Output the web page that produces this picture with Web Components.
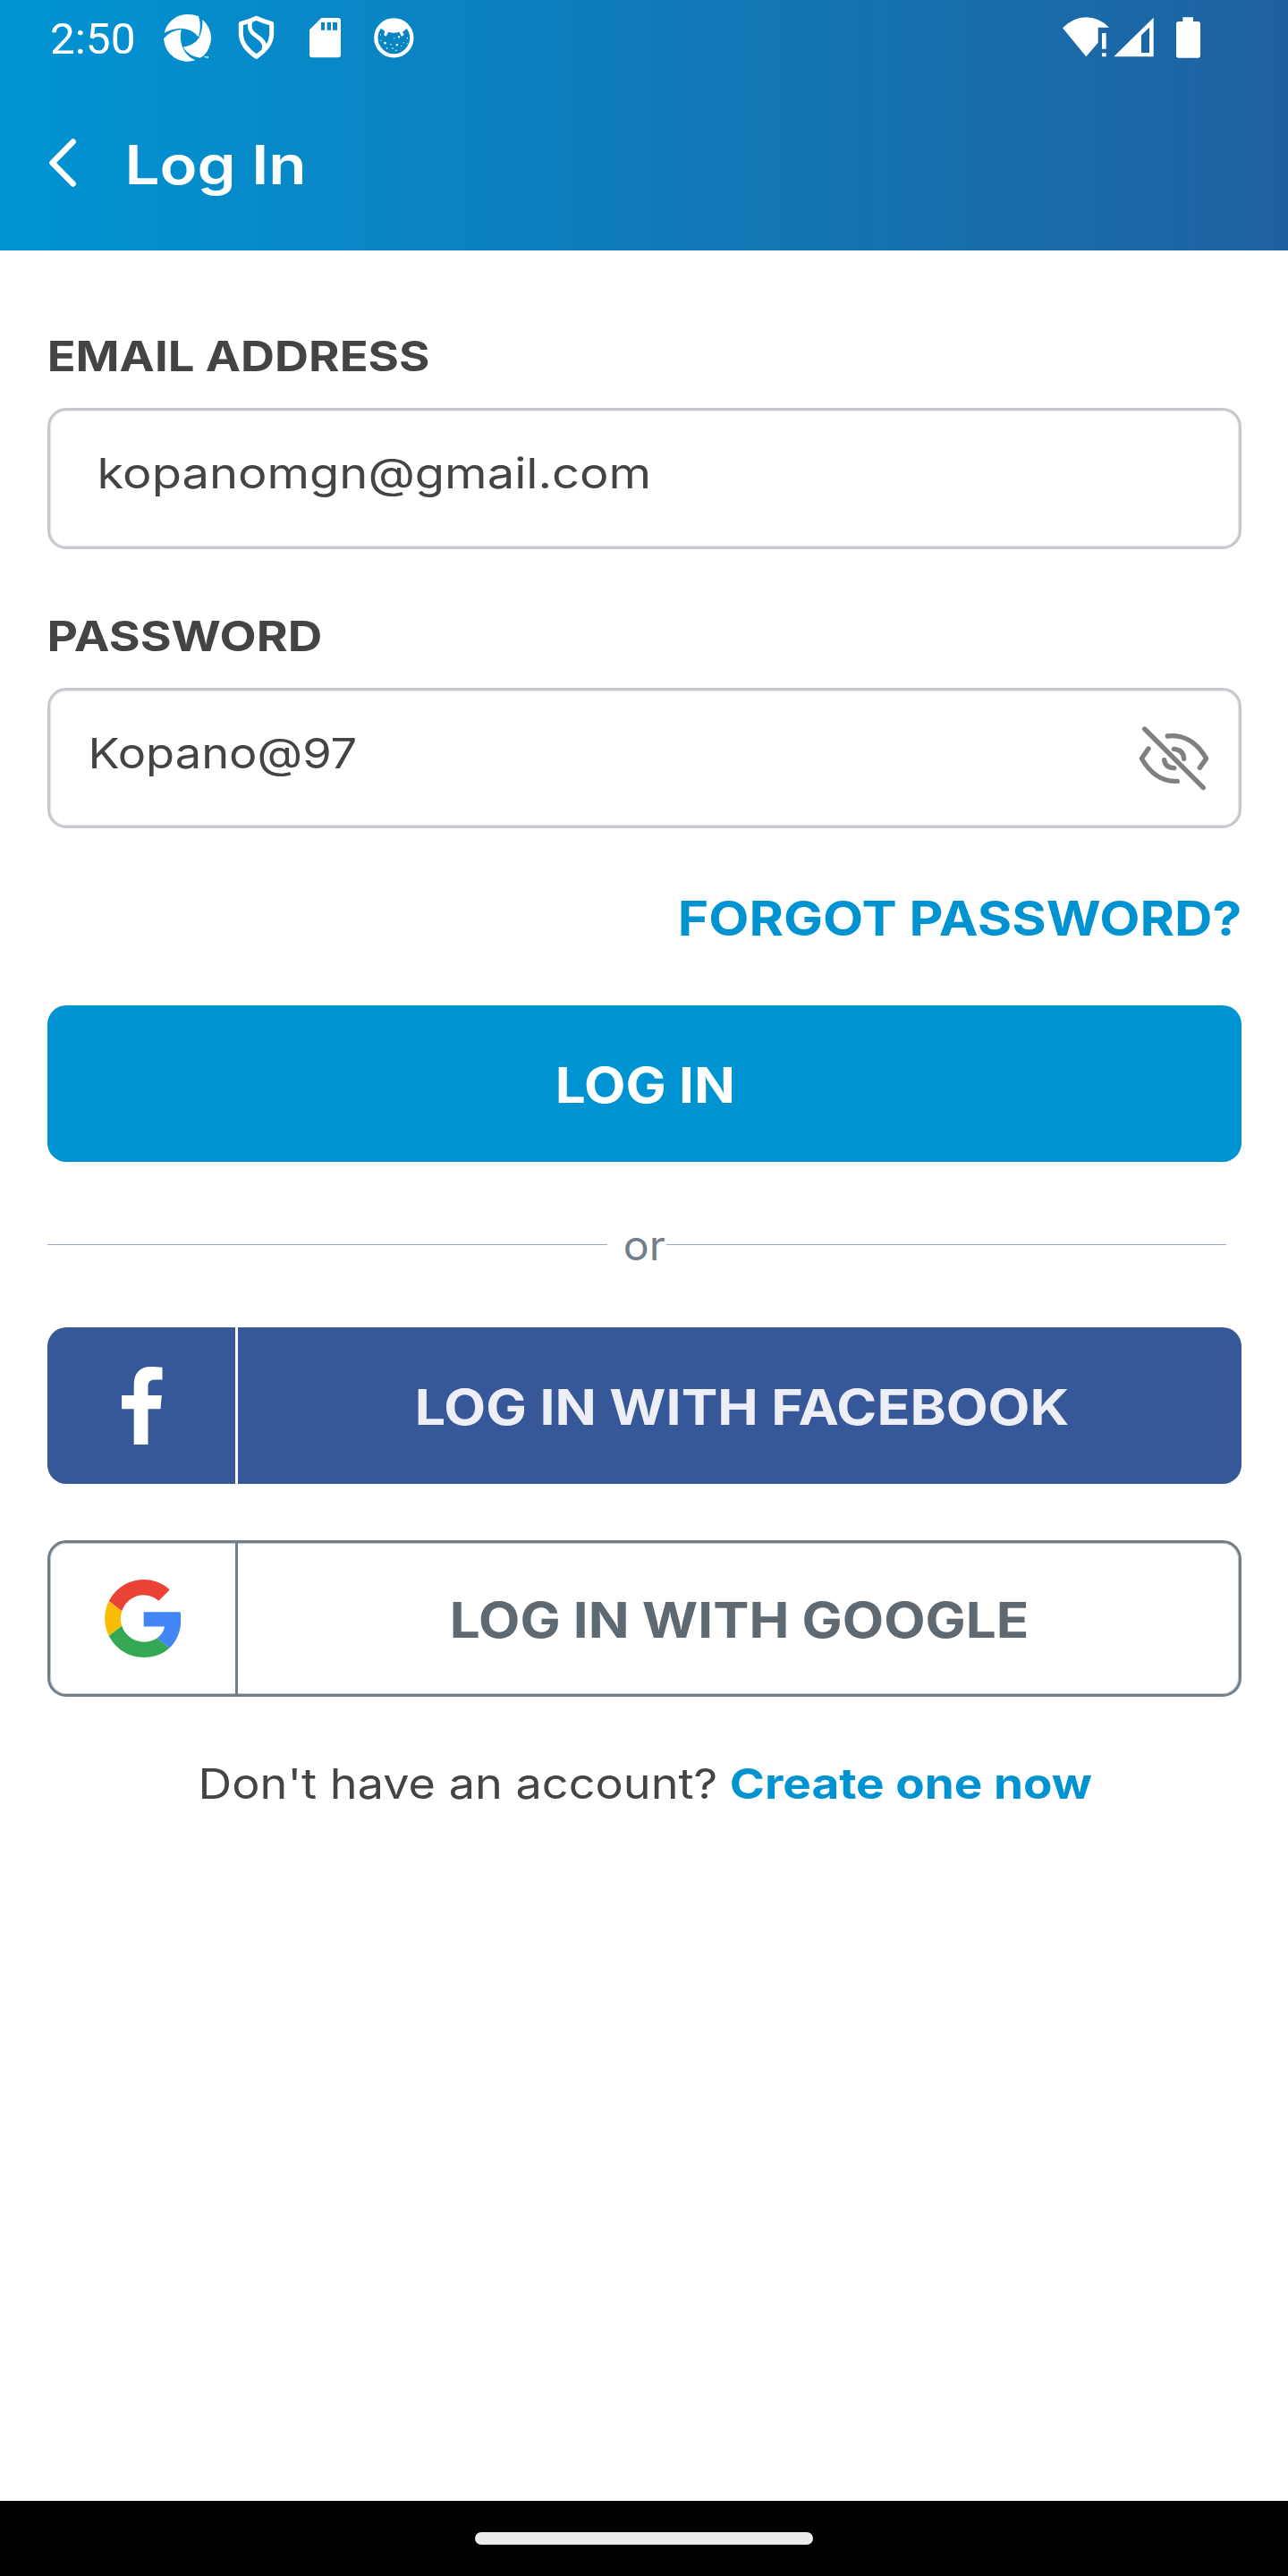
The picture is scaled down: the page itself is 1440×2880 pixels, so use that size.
<!DOCTYPE html>
<html lang="en">
<head>
<meta charset="utf-8">
<title>Log In</title>
<style>
html,body{margin:0;padding:0;background:#fff}
body{width:1440px;height:2880px;overflow:hidden;font-family:Inter,"Open Sans",sans-serif}
</style>
</head>
<body>
<login-screen></login-screen>
<script>
const define = (name, html) => customElements.define(name, class extends HTMLElement {
  connectedCallback() {
    if (this.shadowRoot) return;
    this.attachShadow({ mode: 'open' }).innerHTML = html;
  }
});

/* One line of type. "span" is the inked width in px that the line is fitted to. */
customElements.define('type-line', class extends HTMLElement {
  connectedCallback() {
    if (this.shadowRoot) return;
    const a = n => this.getAttribute(n);
    const size = a('size'), weight = a('weight') || 400, family = a('family') || 'Inter', span = +a('span');
    const ctx = document.createElement('canvas').getContext('2d');
    ctx.font = `${weight} ${size}px ${family}`;
    const m = ctx.measureText(this.textContent);
    const sx = span / (m.actualBoundingBoxLeft + m.actualBoundingBoxRight);
    this.attachShadow({ mode: 'open' }).innerHTML = `<style>
      :host{display:block;flex:none;width:${span}px;height:60px;white-space:nowrap;
        font:${weight} ${size}px/60px ${family},sans-serif}
      span{display:inline-block;transform-origin:0 50%;
        transform:scaleX(${sx}) translateX(${m.actualBoundingBoxLeft}px)}
    </style><span><slot></slot></span>`;
  }
});

define('status-bar', `<style>
  :host{display:flex;align-items:flex-start;height:88px;color:#fff;padding-left:58px;box-sizing:border-box}
  type-line{margin-top:14px}
  svg{display:block;flex:none;fill:#fff}
</style>
<type-line size="49" span="91" family="Roboto">2:50</type-line>
<svg style="margin-left:33px" width="56" height="88" viewBox="546 0 168 264">
  <path d="M551 110A80 80 0 0 1 628 48Q650 48 666 55Q677 87 666 124Q644 96 606 95Q577 97 551 110Z"/>
  <path d="M679 66Q708 91 708 128Q707 162 683 187L671 194Q633 189 614 158Q650 154 668 126Q681 98 679 66Z"/>
  <path d="M608 99Q601 129 612 158Q625 189 655 202A80 80 0 0 1 549 130Q571 102 608 99Z"/>
  <path d="M685 189h7v2h-2v3h-2v-3h-3zM693 189l2 2 2-2h2v6h-2v-3l-2 2-1-2v3h-2z"/>
</svg>
<svg style="margin-left:28px" width="41" height="88" viewBox="798 0 123 264">
  <g fill="none" stroke="#fff" stroke-width="15" stroke-linejoin="round">
  <path d="M860 61Q884 73 911 79V117Q909 157 860 190Q811 157 808 117V79Q836 73 860 61Z"/>
  <path d="M840 70Q836 84 839 96Q842 109 863 123Q895 144 884 168" stroke-width="14"/></g>
</svg>
<svg style="margin-left:39px" width="36" height="88" viewBox="1038 0 108 264">
  <path fill-rule="evenodd" d="M1078 60H1134Q1143 60 1143 69V184Q1143 193 1134 193H1047Q1038 193 1038 184V100ZM1077 75V101H1089V75ZM1097 75V101H1110V75ZM1116 75V101H1131V75Z"/>
</svg>
<svg style="margin-left:36px" width="45" height="88" viewBox="1254 0 135 264">
  <circle cx="1321" cy="127" r="60" fill="none" stroke="#fff" stroke-width="13"/>
  <path d="M1274 93Q1292 64 1321 63Q1350 64 1368 93L1350 107L1355 117L1347 122L1339 107Q1321 113 1303 107L1295 122L1287 117L1291 105Z"/>
  <path d="M1335 121h6v6h-6zM1288 141h7v7h-7zM1328 147h7v7h-7zM1276 134h3v3h-3zM1321 127h3v3h-3zM1309 147h4v4h-4zM1303 125h2v2h-2zM1296 160h4v4h-4zM1315 160h4v4h-4zM1327 167h4v4h-4zM1352 142h3v3h-3zM1364 126h4v4h-4zM1345 153h3v3h-3zM1275 115h3v3h-3zM1364 145h3v3h-3z"/>
</svg>
<svg style="margin-left:725px" width="54" height="88" viewBox="84 0 162 264">
  <path d="M84 94Q120 58 163 58Q205 58 240 92H203V143L163 190ZM216 111h14v53h-14zM216 178h14v12h-14z"/>
</svg>
<svg style="margin-left:3px" width="45" height="88" viewBox="255 0 135 264">
  <path fill-rule="evenodd" d="M256 190L389 59V190ZM348 118V177H375V92Z"/>
</svg>
<svg style="margin-left:25px" width="27" height="88" viewBox="465 0 81 264">
  <path d="M487 58H522V72H538Q546 72 546 80V186Q546 194 538 194H473Q465 194 465 186V80Q465 72 473 72H487Z"/>
</svg>`);

define('text-field', `<style>
  :host{display:block;color:#444}
  .label{margin:0 0 28px 3px}
  .box{display:flex;align-items:center;justify-content:space-between;box-sizing:border-box;height:var(--h,158px);
    border:3px solid #c8c7ce;border-radius:21px;box-shadow:inset 0 0 0 1px #e6e6ea;padding:0 33px 0 var(--inset)}
  .value{padding-bottom:12px}
</style>
<div class="label"><slot name="label"></slot></div>
<div class="box"><div class="value"><slot></slot></div><slot name="action"></slot></div>`);

define('eye-off-icon', `<style>:host{display:block}svg{display:block}</style>
<svg width="79" height="76" viewBox="219 180 237 228" fill="none" stroke="#808080" stroke-width="16" stroke-linecap="round" stroke-linejoin="round">
  <path d="M239 195L436 392M316 219C370 211 415 241 446 294L424 325M252 261L229 294C262 350 305 373 349 370M337 262Q369 264 371 295M305 299Q309 326 338 326"/>
</svg>`);

define('primary-button', `<style>
  :host{display:flex;align-items:center;justify-content:center;height:175px;box-sizing:border-box;padding-top:3px;
    border-radius:21px;background:#0093d1;color:#fff}
</style><slot></slot>`);

define('or-divider', `<style>
  :host{display:flex;align-items:center;height:59px;color:#737f88}
  i{display:block;flex:none;width:626px;height:1px;background:#9aa9b8}
  .t{margin:0 2px 0 20px;padding-top:2px}
</style><i></i><div class="t"><slot></slot></div><i></i>`);

define('social-button', `<style>
  :host{display:flex;box-sizing:border-box;height:175px;border-radius:21px;overflow:hidden}
  :host([brand=facebook]){background:#375898;color:#eeeff6;--rule:#fff;--pad:0px}
  :host([brand=google]){border:3px solid #727e87;box-shadow:inset 0 0 0 1px #c3c8cc;color:#5f6971;--rule:#727e87;--pad:3px}
  .mark{display:flex;align-items:center;justify-content:center;width:calc(210px - var(--pad));border-right:3px solid var(--rule)}
  .text{display:flex;flex:1;align-items:center;padding-top:3px}
</style>
<div class="mark"><slot name="mark"></slot></div><div class="text"><slot></slot></div>`);

define('facebook-mark', `<style>:host{display:block;padding-left:2px}svg{display:block}</style>
<svg width="46" height="87" viewBox="135.500 1528 46 87"><path fill="#fff" d="M149.200 1615V1575.300H135.600V1560H149.200V1548C149.200 1535 156 1528 168 1528C172 1528 177 1528.500 181 1528.800V1542.500H173C167 1542.500 165 1545.500 165 1550V1560H180.300L179 1575.300H165V1615Z"/></svg>`);

define('google-mark', `<style>:host{display:block}svg{display:block}</style>
<svg width="85.500" height="87" viewBox="0 0 47 48">
<path fill="#EA4335" d="M24 9.500c3.540 0 6.710 1.220 9.210 3.600l6.850-6.850C35.900 2.380 30.470 0 24 0 14.620 0 6.510 5.380 2.560 13.220l7.980 6.190C12.430 13.720 17.740 9.500 24 9.500z"/>
<path fill="#4285F4" d="M46.980 24.550c0-1.570-.15-3.090-.38-4.550H24v9.020h12.940c-.58 2.960-2.260 5.480-4.780 7.180l7.730 6c4.510-4.180 7.090-10.360 7.090-17.650z"/>
<path fill="#FBBC05" d="M10.530 28.590c-.48-1.450-.76-2.990-.76-4.590s.27-3.140.76-4.590l-7.980-6.190C.92 16.460 0 20.120 0 24c0 3.880.92 7.540 2.560 10.780l7.970-6.190z"/>
<path fill="#34A853" d="M24 48c6.480 0 11.930-2.130 15.890-5.810l-7.730-6c-2.150 1.450-4.920 2.300-8.160 2.300-6.260 0-11.570-4.220-13.470-9.910l-7.980 6.190C6.510 42.620 14.620 48 24 48z"/></svg>`);

define('home-indicator', `<style>
  :host{display:flex;justify-content:center;align-items:center;height:84px;background:#000}
  i{display:block;width:378px;height:14px;border-radius:7px;background:#ebebeb}
</style><i></i>`);

define('page-header', `<style>
  :host{display:flex;flex-direction:column;height:280px;background:linear-gradient(90deg,#0094d3,#1f61a0);color:#fff}
  nav{display:flex;align-items:center;height:192px;padding-left:53px}
  svg{display:block;margin:0 56px 4px 0}
</style>
<status-bar></status-bar>
<nav>
  <svg width="35" height="60" viewBox="53 152 35 60"><path d="M81.700 158.500L58.500 182L81.700 205.500" fill="none" stroke="#fff" stroke-width="6.500" stroke-linecap="round" stroke-linejoin="round"/></svg>
  <type-line size="60.500" weight="600" span="194">Log In</type-line>
</nav>`);

define('login-screen', `<style>
  :host{display:flex;flex-direction:column;width:1440px;height:2880px;background:#fff}
  main{display:flex;flex-direction:column;padding:88px 52px 0 53px}
  .forgot{display:flex;justify-content:flex-end;margin:71px 2px 67px 0;color:#0093d1}
  .signup{display:flex;margin:67px 0 0 173px;color:#444}
  .signup b{display:block;margin-left:17.500px;font-weight:inherit;color:#0093d1}
  home-indicator{margin-top:auto}
</style>
<page-header></page-header>
<main>
  <text-field style="--inset:56px">
    <type-line slot="label" size="47" weight="700" span="422.500">EMAIL ADDRESS</type-line>
    <type-line size="47" span="612.500">kopanomgn@gmail.com</type-line>
  </text-field>
  <text-field style="--h:157px;--inset:47px;margin-top:67px">
    <type-line slot="label" size="47" weight="700" span="302">PASSWORD</type-line>
    <type-line size="47" span="294.500">Kopano@97</type-line>
    <eye-off-icon slot="action"></eye-off-icon>
  </text-field>
  <div class="forgot"><type-line size="53" weight="700" span="625.500">FORGOT PASSWORD?</type-line></div>
  <primary-button><type-line size="54.500" weight="700" span="194">LOG IN</type-line></primary-button>
  <or-divider style="margin:63px 0"><type-line size="45" span="44">or</type-line></or-divider>
  <social-button brand="facebook">
    <facebook-mark slot="mark"></facebook-mark>
    <type-line style="margin-left:200.500px" size="54.500" weight="700" span="727">LOG IN WITH FACEBOOK</type-line>
  </social-button>
  <social-button brand="google" style="margin-top:63px">
    <google-mark slot="mark"></google-mark>
    <type-line style="margin-left:240px" size="54.500" weight="700" span="642">LOG IN WITH GOOGLE</type-line>
  </social-button>
  <div class="signup">
    <type-line size="47" span="574">Don't have an account?</type-line>
    <b><type-line size="47" weight="700" span="403">Create one now</type-line></b>
  </div>
</main>
<home-indicator></home-indicator>`);
</script>
</body>
</html>
